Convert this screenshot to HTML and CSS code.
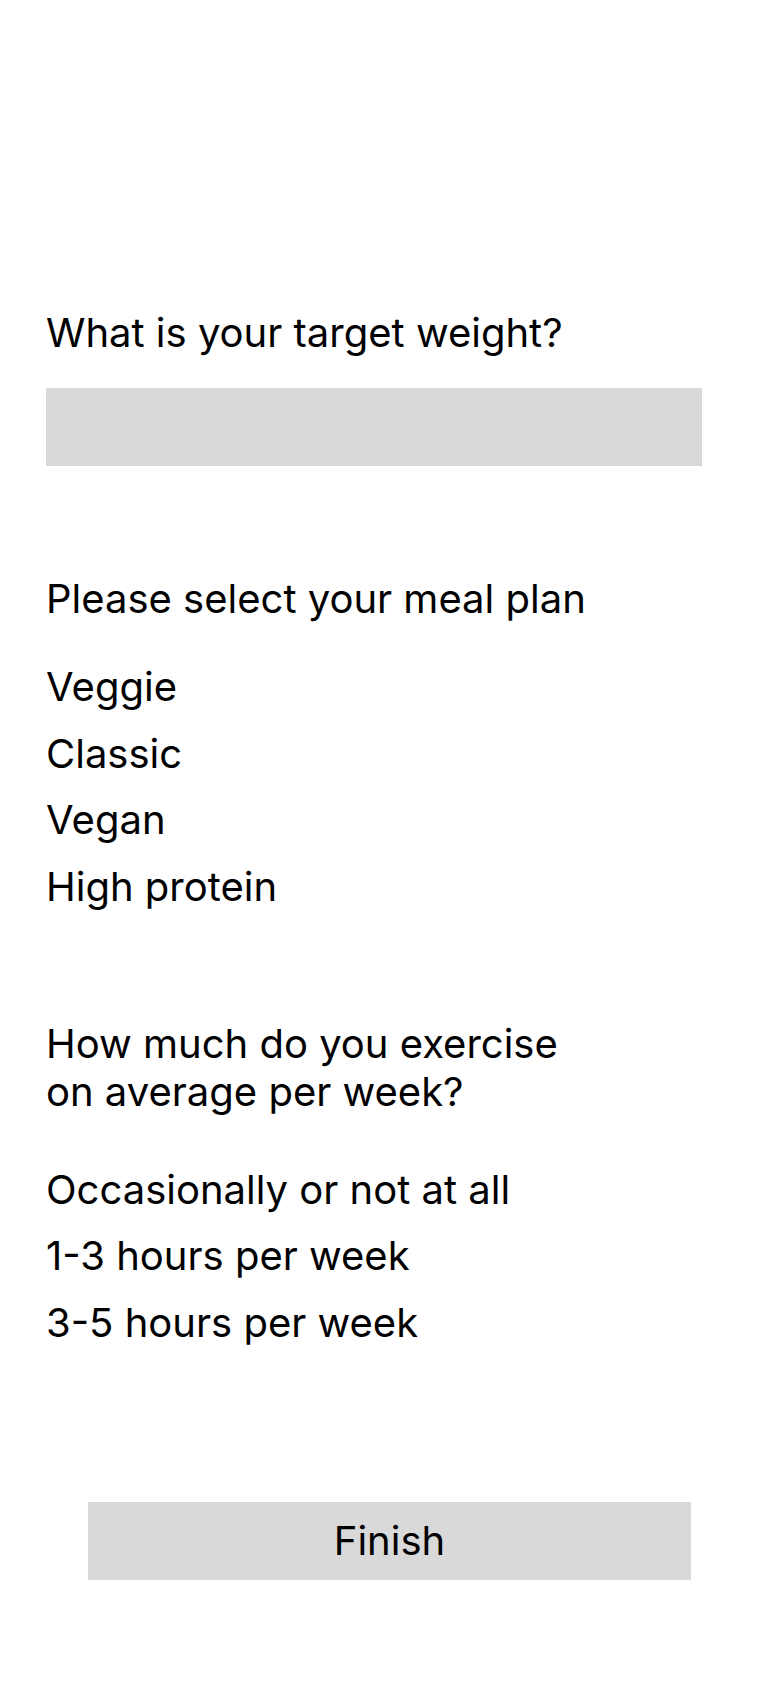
FILE: index.html
```html
<!DOCTYPE html>
<html lang="en">
<head>
<meta charset="UTF-8" />
<meta name="viewport" content="width=device-width, initial-scale=1" />
<title>Your plan</title>
<link rel="stylesheet" href="styles.css">
</head>
<body>

<main class="form">
  <section class="question">
    <h2 class="question-title">What is your target weight?</h2>
    <input class="text-field" type="text" aria-label="Target weight" />
  </section>

  <section class="question">
    <h2 class="question-title">Please select your meal plan</h2>
    <ul class="options">
      <li>Veggie</li>
      <li>Classic</li>
      <li>Vegan</li>
      <li>High protein</li>
    </ul>
  </section>

  <section class="question">
    <h2 class="question-title">How much do you exercise<br>on average per week?</h2>
    <ul class="options options-wide">
      <li>Occasionally or not at all</li>
      <li>1-3 hours per week</li>
      <li>3-5 hours per week</li>
    </ul>
  </section>

  <button class="finish-btn">Finish</button>
</main>

</body>
</html>
```

FILE: styles.css
```css
body {
  margin: 0;
  font-family: Inter, "Noto Sans", sans-serif;
  background: #fff;
  color: #000;
}
.form {
  display: flex;
  flex-direction: column;
  padding: 309px 0 0 46px;
}
.question {
  display: flex;
  flex-direction: column;
}
.question + .question {
  margin-top: 109px;
}
.question-title {
  margin: 0;
  font-size: 40px;
  font-weight: 400;
  line-height: 48px;
}
.text-field {
  margin-top: 31px;
  width: 656px;
  height: 78px;
  border: none;
  background: #d9d9d9;
  box-sizing: border-box;
  outline: none;
}
.options {
  list-style: none;
  margin: 40px 0 0;
  padding: 0;
  display: flex;
  flex-direction: column;
  gap: 18.5px;
  font-size: 40px;
  line-height: 48px;
}
.options-wide {
  margin-top: 50px;
}
.finish-btn {
  align-self: flex-start;
  margin: 155px 0 0 42px;
  width: 603px;
  height: 78px;
  border: none;
  background: #d9d9d9;
  font-family: inherit;
  font-size: 40px;
  color: #000;
  cursor: pointer;
}
```
